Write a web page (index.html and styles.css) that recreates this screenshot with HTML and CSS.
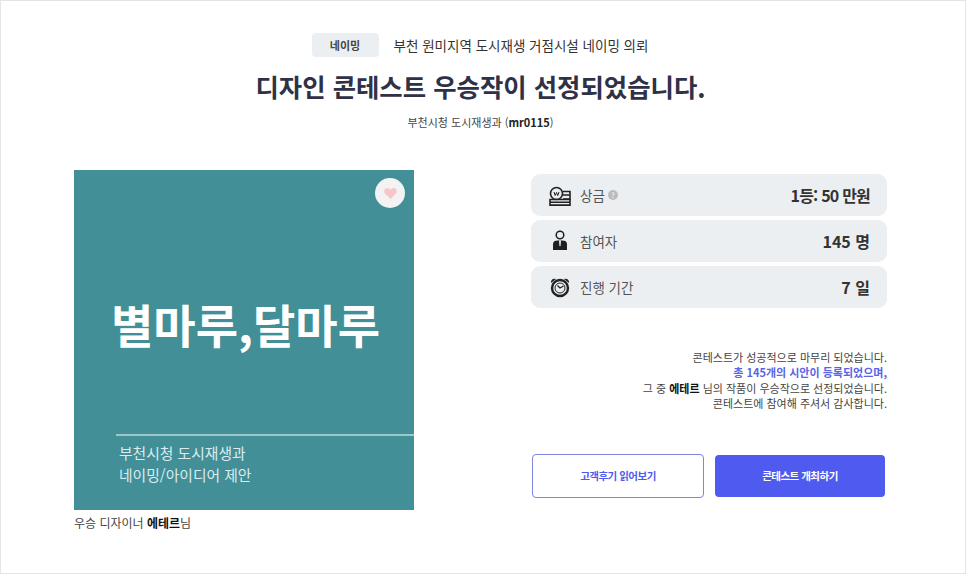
FILE: index.html
```html
<!DOCTYPE html>
<html lang="ko">
<head>
    <meta charset="UTF-8">
    <meta name="viewport" content="width=device-width, initial-scale=1.0">
    <title>디자인 콘테스트 우승작</title>
    <link rel="stylesheet" href="styles.css">
</head>
<body>
    <div class="container">
        <div class="header">
            <div class="header-top">
                <span class="chip">네이밍</span>
                <span class="contest-name">부천 원미지역 도시재생 거점시설 네이밍 의뢰</span>
            </div>
            <h1 class="title">디자인 콘테스트 우승작이 선정되었습니다.</h1>
            <div class="client">부천시청 도시재생과 (<b>mr0115</b>)</div>
        </div>

        <div class="content">
            <div class="winner">
                <div class="poster">
                    <div class="like">
                        <svg width="13" height="11" viewBox="0 0 16 14"><path d="M8 14 1.300 7.400C-.4 5.700-.4 3 1.200 1.300 2.800-.4 5.400-.4 7 1.200L8 2.200l1-1c1.600-1.600 4.200-1.600 5.800.1 1.600 1.700 1.600 4.400-.1 6.100z" fill="#f5c6cb"/></svg>
                    </div>
                    <div class="poster-name">별마루,달마루</div>
                    <div class="poster-desc">부천시청 도시재생과<br>네이밍/아이디어 제안</div>
                </div>
                <div class="designer">우승 디자이너 <b>에테르</b>님</div>
            </div>

            <div class="summary">
                <div class="info-list">
                    <div class="info-row">
                        <svg class="info-icon" width="26" height="22" viewBox="0 0 26 22" fill="none" stroke="#222" stroke-width="1.600">
                            <circle cx="10.500" cy="9.500" r="6"/>
                            <path d="M8 8l1.200 3.500L10.500 8.500l1.300 3L13 8" stroke-width="1"/>
                            <path d="M17 7.500h7v3.500h-7M17 11h7v4h-7"/>
                            <path d="M4 15.500h20v2.800H4zM4 18.300h20v2.800H4z"/>
                        </svg>
                        <span class="info-label">상금</span>
                        <span class="help">?</span>
                        <span class="info-value tight">1등: 50 만원</span>
                    </div>
                    <div class="info-row">
                        <svg class="info-icon" width="26" height="22" viewBox="0 0 26 22">
                            <circle cx="14" cy="5" r="3.800" fill="none" stroke="#1f1f1f" stroke-width="1.500"/>
                            <path d="M7 20v-6c0-2.500 2-3.500 4.500-3.500h5c2.500 0 4.500 1 4.500 3.500v6z" fill="#1f1f1f"/>
                            <path d="M13 10.500h2l-.4 5-.6 1-.6-1z" fill="#eceff2"/>
                        </svg>
                        <span class="info-label">참여자</span>
                        <span class="info-value">145 명</span>
                    </div>
                    <div class="info-row">
                        <svg class="info-icon" width="26" height="22" viewBox="0 0 26 22" fill="none" stroke="#222">
                            <circle cx="14" cy="12" r="8" stroke-width="2.400"/>
                            <circle cx="14" cy="12" r="5" stroke-width="1"/>
                            <path d="M14 12 11.500 9.500M14 12l3.500-2" stroke-width="1.300"/>
                            <path d="M5 7C4.500 4 7 2 10 3zM23 7C23.500 4 21 2 18 3z" fill="#222" stroke="none"/>
                        </svg>
                        <span class="info-label">진행 기간</span>
                        <span class="info-value">7 일</span>
                    </div>
                </div>

                <div class="message">
                    콘테스트가 성공적으로 마무리 되었습니다.<br>
                    <b class="highlight">총 145개의 시안이 등록되었으며,</b><br>
                    그 중 <b class="name">에테르</b> 님의 작품이 우승작으로 선정되었습니다.<br>
                    콘테스트에 참여해 주셔서 감사합니다.
                </div>

                <div class="buttons">
                    <a class="btn btn-outline">고객후기 읽어보기</a>
                    <a class="btn btn-primary">콘테스트 개최하기</a>
                </div>
            </div>
        </div>
    </div>
</body>
</html>
```

FILE: styles.css
```css
:root {
    --primary: #4f5bef;
    --panel: #eceff2;
    --dark: #2f3147;
    --text: #444;
}

* {
    margin: 0;
    padding: 0;
    box-sizing: border-box;
    font-family: "Noto Sans CJK KR", "Noto Sans", sans-serif;
}

body {
    background-color: #fff;
    color: var(--text);
}

.container {
    width: 966px;
    height: 574px;
    border: 1px solid #e4e4e4;
    overflow: hidden;
}

.header {
    display: flex;
    flex-direction: column;
    align-items: center;
    padding: 32px 5px 0 0;
}

.header-top {
    display: flex;
    align-items: center;
    gap: 15px;
    margin-right: 1px;
}

.chip {
    width: 67px;
    height: 24px;
    line-height: 24px;
    text-align: center;
    background-color: var(--panel);
    border-radius: 4px;
    font-size: 11px;
    font-weight: 700;
    color: #444;
}

.contest-name {
    font-size: 13.500px;
    line-height: 22px;
    color: #333;
}

.title {
    margin-top: 10px;
    font-size: 25.400px;
    line-height: 38px;
    font-weight: 700;
    color: var(--dark);
}

.client {
    margin-top: 9px;
    font-size: 11px;
    line-height: 16px;
    color: #444;
}

.client b {
    color: #222;
}

.content {
    display: flex;
    justify-content: space-between;
    padding: 40px 78px 0 73px;
}

.winner {
    width: 340px;
}

.poster {
    position: relative;
    width: 340px;
    height: 340px;
    padding-top: 121px;
    background-color: #428f98;
    color: #fff;
}

.like {
    position: absolute;
    top: 8px;
    right: 9px;
    width: 30px;
    height: 30px;
    display: flex;
    justify-content: center;
    align-items: center;
    background-color: #f3f3f3;
    border-radius: 50%;
}

.poster-name {
    padding-left: 3px;
    text-align: center;
    font-size: 46px;
    line-height: 64px;
    font-weight: 700;
}

.poster-desc {
    margin-top: 79px;
    margin-left: 42px;
    padding: 6px 0 0 3px;
    border-top: 2px solid #9cc7cb;
    font-size: 14.800px;
    line-height: 22px;
    color: #dcecee;
}

.designer {
    margin-top: 5px;
    font-size: 12px;
    line-height: 16px;
    color: #444;
}

.designer b {
    color: #111;
}

.summary {
    width: 356px;
    margin-top: 4px;
}

.info-list {
    display: flex;
    flex-direction: column;
    gap: 4px;
}

.info-row {
    display: flex;
    align-items: center;
    height: 42px;
    padding: 0 17px 0 15px;
    background-color: var(--panel);
    border-radius: 9px;
}

.info-icon {
    flex: none;
    margin-right: 8px;
}

.info-label {
    font-size: 13.500px;
    color: #555;
}

.help {
    width: 10px;
    height: 10px;
    margin-left: 3px;
    border-radius: 50%;
    background-color: #bbb;
    color: #fff;
    font-size: 7px;
    line-height: 10px;
    text-align: center;
}

.info-value {
    margin-left: auto;
    font-size: 16px;
    font-weight: 700;
    color: #333;
}

.tight {
    letter-spacing: -0.800px;
}

.message {
    margin-top: 42px;
    text-align: right;
    font-size: 11px;
    line-height: 15.400px;
    color: #444;
}

.highlight {
    color: #5a64e8;
}

.name {
    color: #111;
}

.buttons {
    display: flex;
    justify-content: space-between;
    align-items: center;
    margin-top: 42px;
    padding: 0 2px 0 1px;
}

.btn {
    display: flex;
    justify-content: center;
    align-items: center;
    width: 172px;
    height: 44px;
    border-radius: 4px;
    font-size: 10.500px;
    font-weight: 700;
    letter-spacing: -0.500px;
    cursor: pointer;
}

.btn-outline {
    border: 1px solid #7f86e0;
    color: var(--primary);
    background-color: #fff;
}

.btn-primary {
    width: 170px;
    height: 42px;
    background-color: var(--primary);
    color: #fff;
}
```
